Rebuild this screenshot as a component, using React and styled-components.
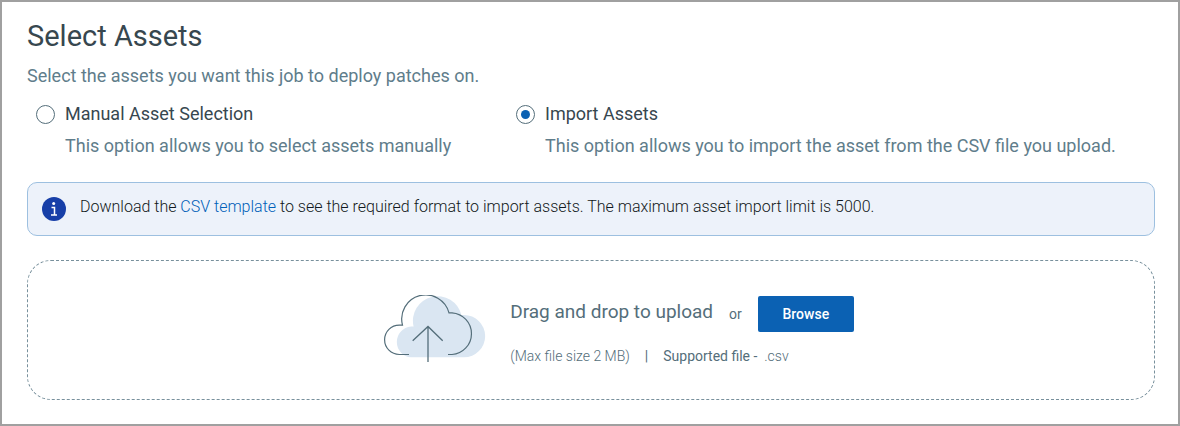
import React, { useRef, useState } from 'react';
import styled, { createGlobalStyle } from 'styled-components';

const GlobalStyle = createGlobalStyle`
  * {
    box-sizing: border-box;
  }

  body {
    margin: 0;
    background-color: #ffffff;
    font-family: Roboto, 'Liberation Sans', sans-serif;
  }
`;

const Page = styled.main`
  min-height: 100vh;
  padding: 14px 23px 24px 25px;
  border: 2px solid #a0a0a0;
`;

const Title = styled.h1`
  margin: 0;
  font-size: 29px;
  font-weight: 400;
  line-height: 40px;
  color: #37474f;
`;

const Subtitle = styled.p`
  margin: 8px 0 14px;
  font-size: 18px;
  line-height: 24px;
  color: #607d8b;
`;

const Options = styled.div`
  display: grid;
  grid-template-columns: minmax(0, 480px) 1fr;
  padding-left: 9px;
`;

const Option = styled.div`
  display: grid;
  grid-template-columns: 19px 1fr;
  column-gap: 10px;
  row-gap: 8px;
  align-items: center;
`;

const Radio = styled.input`
  appearance: none;
  display: grid;
  place-content: center;
  width: 19px;
  height: 19px;
  margin: 0;
  border: 1px solid #546e7a;
  border-radius: 50%;
  cursor: pointer;

  &:checked::before {
    content: '';
    width: 9px;
    height: 9px;
    border-radius: 50%;
    background-color: #0b61b3;
  }
`;

const OptionLabel = styled.label`
  font-size: 18px;
  line-height: 24px;
  color: #37474f;
  cursor: pointer;
`;

const OptionHint = styled.p`
  grid-column: 2;
  margin: 0;
  font-size: 18px;
  line-height: 24px;
  color: #607d8b;
`;

const Notice = styled.div`
  display: flex;
  align-items: center;
  gap: 14px;
  min-height: 54px;
  margin-top: 24px;
  padding: 0 14px;
  border: 1px solid #9dc0e0;
  border-radius: 10px;
  background-color: #edf2fa;
`;

const NoticeText = styled.p`
  margin: 0;
  padding-bottom: 4px;
  font-size: 16px;
  font-weight: 300;
  line-height: 20px;
  color: #111820;
`;

const TemplateLink = styled.a`
  color: #005fb8;
  text-decoration: none;
`;

const DropZone = styled.div`
  display: flex;
  justify-content: center;
  align-items: center;
  gap: 24px;
  min-height: 140px;
  margin-top: 24px;
  padding: 24px 0 24px 56px;
  border: 1px dashed #78909c;
  border-radius: 24px;
`;

const UploadInfo = styled.div`
  display: flex;
  flex-direction: column;
  gap: 14px;
  padding-top: 2px;
`;

const UploadRow = styled.div`
  display: flex;
  align-items: center;
  gap: 16px;
  color: #546e7a;
`;

const UploadPrompt = styled.span`
  padding-bottom: 4px;
  font-size: 19px;
  line-height: 24px;
`;

const Or = styled.span`
  font-size: 14px;
  line-height: 20px;
`;

const BrowseButton = styled.button`
  width: 96px;
  height: 36px;
  padding: 0;
  border: none;
  border-radius: 2px;
  background-color: #0b61b3;
  color: #ffffff;
  font-family: inherit;
  font-size: 14px;
  font-weight: 500;
  cursor: pointer;
`;

const FileRules = styled.div`
  display: flex;
  gap: 15px;
  font-size: 14px;
  font-weight: 300;
  line-height: 20px;
  color: #546e7a;
`;

const Strong = styled.span`
  font-weight: 400;
`;

const InfoIcon = () => (
  <svg width="24" height="24" viewBox="0 0 24 24" aria-hidden="true">
    <circle cx="12" cy="12" r="12" fill="#173fa8" />
    <circle cx="11.7" cy="6.6" r="1.5" fill="#fff" />
    <path d="M9.5 10.4h3v7.4M9 17.9h6" fill="none" stroke="#fff" strokeWidth="1.5" />
  </svg>
);

const CloudUploadIcon = () => (
  <svg width="102" height="70" viewBox="0 0 102 70" aria-hidden="true">
    <path
      d="M27 62.3A15.4 15.4 0 0 1 27 31.6h2.6A24.5 24.5 0 0 1 77.4 20H80a21.1 21.1 0 0 1 0 42.3z"
      fill="#dae6f2"
    />
    <path
      d="M25 59.5H15.3a14.7 14.7 0 0 1 0-29.4h3.2A24 24 0 0 1 65 17.8h3a20.9 20.9 0 0 1 0 41.7h-4"
      fill="none"
      stroke="#546e7a"
      strokeWidth="1.2"
    />
    <path d="M44 67V31.5M28.7 45.8L44 31.5l14.7 14.3" fill="none" stroke="#546e7a" strokeWidth="1.3" />
  </svg>
);

const App = () => {
  const [mode, setMode] = useState('import');
  const fileInput = useRef(null);

  const handleChange = (e) => {
    setMode(e.target.value);
  };

  return (
    <>
      <GlobalStyle />
      <Page>
        <Title>Select Assets</Title>
        <Subtitle>Select the assets you want this job to deploy patches on.</Subtitle>

        <Options role="radiogroup" aria-label="Asset selection">
          <Option>
            <Radio
              type="radio"
              id="manual"
              name="mode"
              value="manual"
              checked={mode === 'manual'}
              onChange={handleChange}
            />
            <OptionLabel htmlFor="manual">Manual Asset Selection</OptionLabel>
            <OptionHint>This option allows you to select assets manually</OptionHint>
          </Option>
          <Option>
            <Radio
              type="radio"
              id="import"
              name="mode"
              value="import"
              checked={mode === 'import'}
              onChange={handleChange}
            />
            <OptionLabel htmlFor="import">Import Assets</OptionLabel>
            <OptionHint>This option allows you to import the asset from the CSV file you upload.</OptionHint>
          </Option>
        </Options>

        <Notice>
          <InfoIcon />
          <NoticeText>
            Download the <TemplateLink href="#template">CSV template</TemplateLink> to see the required format to
            import assets. The maximum asset import limit is 5000.
          </NoticeText>
        </Notice>

        <DropZone>
          <CloudUploadIcon />
          <UploadInfo>
            <UploadRow>
              <UploadPrompt>Drag and drop to upload</UploadPrompt>
              <Or>or</Or>
              <BrowseButton type="button" onClick={() => fileInput.current.click()}>
                Browse
              </BrowseButton>
              <input ref={fileInput} type="file" accept=".csv" aria-label="CSV file" hidden />
            </UploadRow>
            <FileRules>
              <span>(Max file size 2 MB)</span>
              <Strong>|</Strong>
              <span>
                <Strong>Supported file -</Strong>&nbsp; .csv
              </span>
            </FileRules>
          </UploadInfo>
        </DropZone>
      </Page>
    </>
  );
};

export default App;
